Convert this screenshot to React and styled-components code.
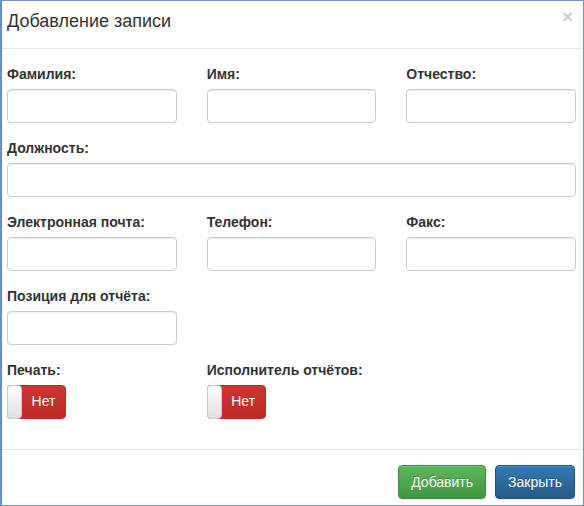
import React from "react";
import styled, { createGlobalStyle } from "styled-components";

const Global = createGlobalStyle`
  html, body { margin: 0; padding: 0; background: #fff; }
  body { font-family: "Liberation Sans", Arial, sans-serif; font-size: 14px; line-height: 1.42857; color: #333; }
  * { box-sizing: border-box; }
`;

const Frame = styled.div`
  width: 584px;
  height: 506px;
  overflow: hidden;
  border: 1px solid #7193c6;
  border-left: 2px solid #6a8ec4;
  background: #fff;
`;

const Header = styled.div`
  display: flex;
  align-items: flex-start;
  justify-content: space-between;
  padding: 7px 10px 14px 5px;
  border-bottom: 1px solid #e5e5e5;
`;

const Title = styled.h4`
  margin: 0;
  font-size: 18px;
  font-weight: normal;
  line-height: 26px;
  color: #333;
`;

const Close = styled.button`
  border: 0;
  background: transparent;
  padding: 0;
  margin-top: -1px;
  font-family: "Liberation Sans", Arial, sans-serif;
  font-size: 19px;
  font-weight: bold;
  line-height: 1;
  color: #000;
  opacity: 0.2;
  cursor: pointer;
`;

const Body = styled.div`
  padding: 15px 7px 15px 5px;
  border-bottom: 1px solid #e5e5e5;
`;

const Row = styled.div`
  display: grid;
  grid-template-columns: repeat(3, 1fr);
  column-gap: 30px;
`;

const Group = styled.div`
  margin-bottom: 15px;
  grid-column: span ${(p) => p.span || 1};
`;

const Label = styled.label`
  display: block;
  font-weight: bold;
  margin-bottom: 5px;
  line-height: 20px;
  font-size: 14px;
  color: #333;
`;

const Input = styled.input`
  display: block;
  width: 100%;
  height: 34px;
  padding: 6px 12px;
  font-size: 14px;
  font-family: inherit;
  border: 1px solid #ccc;
  border-radius: 4px;
  box-shadow: inset 0 1px 1px rgba(0, 0, 0, 0.075);
  background: #fff;
  outline: none;
`;

const Toggle = styled.div`
  position: relative;
  width: 59px;
  height: 34px;
  border-radius: 4px;
  border: 1px solid #b92c28;
  background: linear-gradient(#cc3430, #bd2c28);
  color: #fff;
  display: flex;
  align-items: center;
  justify-content: center;
  padding-left: 14px;
  font-size: 14px;
`;

const Handle = styled.span`
  position: absolute;
  left: -1px;
  top: -1px;
  bottom: -1px;
  width: 15px;
  border: 1px solid #ccc;
  border-radius: 4px;
  background: linear-gradient(#fff, #e0e0e0);
`;

const Footer = styled.div`
  display: flex;
  justify-content: flex-end;
  gap: 9px;
  padding: 15px 8px 15px 15px;
`;

const Button = styled.button`
  height: 34px;
  padding: 6px 12px;
  font-family: inherit;
  font-size: 14px;
  line-height: 20px;
  color: #fff;
  border-radius: 4px;
  border: 1px solid ${(p) => (p.variant === "success" ? "#3e8f3e" : "#245580")};
  background: ${(p) =>
    p.variant === "success"
      ? "linear-gradient(#5cb85c, #419641)"
      : "linear-gradient(#337ab7, #265a88)"};
  text-shadow: 0 -1px 0 rgba(0, 0, 0, 0.2);
  box-shadow: inset 0 1px 0 rgba(255, 255, 255, 0.15), 0 1px 1px rgba(0, 0, 0, 0.075);
  cursor: pointer;
`;

function Field({ label, span }) {
  return (
    <Group span={span}>
      <Label>{label}</Label>
      <Input type="text" />
    </Group>
  );
}

function Switch({ label }) {
  return (
    <Group>
      <Label>{label}</Label>
      <Toggle>
        <Handle />
        Нет
      </Toggle>
    </Group>
  );
}

export default function App() {
  return (
    <>
      <Global />
      <Frame>
        <Header>
          <Title>Добавление записи</Title>
          <Close aria-label="Закрыть">×</Close>
        </Header>
        <Body>
          <Row>
            <Field label="Фамилия:" />
            <Field label="Имя:" />
            <Field label="Отчество:" />
          </Row>
          <Row>
            <Field label="Должность:" span={3} />
          </Row>
          <Row>
            <Field label="Электронная почта:" />
            <Field label="Телефон:" />
            <Field label="Факс:" />
          </Row>
          <Row>
            <Field label="Позиция для отчёта:" />
          </Row>
          <Row>
            <Switch label="Печать:" />
            <Switch label="Исполнитель отчётов:" />
          </Row>
        </Body>
        <Footer>
          <Button variant="success">Добавить</Button>
          <Button variant="primary">Закрыть</Button>
        </Footer>
      </Frame>
    </>
  );
}
